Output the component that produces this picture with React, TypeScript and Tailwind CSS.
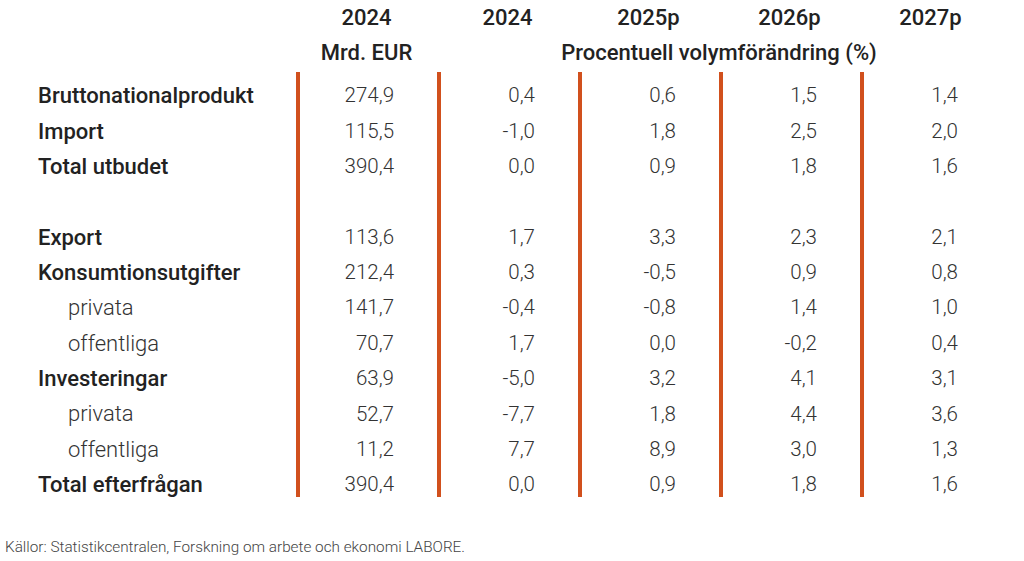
import React from "react";

type Row = { label: string; kind: "main" | "sub" | "blank"; values: string[] };

const rows: Row[] = [
  { label: "Bruttonationalprodukt", kind: "main", values: ["274,9", "0,4", "0,6", "1,5", "1,4"] },
  { label: "Import", kind: "main", values: ["115,5", "-1,0", "1,8", "2,5", "2,0"] },
  { label: "Total utbudet", kind: "main", values: ["390,4", "0,0", "0,9", "1,8", "1,6"] },
  { label: "", kind: "blank", values: ["", "", "", "", ""] },
  { label: "Export", kind: "main", values: ["113,6", "1,7", "3,3", "2,3", "2,1"] },
  { label: "Konsumtionsutgifter", kind: "main", values: ["212,4", "0,3", "-0,5", "0,9", "0,8"] },
  { label: "privata", kind: "sub", values: ["141,7", "-0,4", "-0,8", "1,4", "1,0"] },
  { label: "offentliga", kind: "sub", values: ["70,7", "1,7", "0,0", "-0,2", "0,4"] },
  { label: "Investeringar", kind: "main", values: ["63,9", "-5,0", "3,2", "4,1", "3,1"] },
  { label: "privata", kind: "sub", values: ["52,7", "-7,7", "1,8", "4,4", "3,6"] },
  { label: "offentliga", kind: "sub", values: ["11,2", "7,7", "8,9", "3,0", "1,3"] },
  { label: "Total efterfrågan", kind: "main", values: ["390,4", "0,0", "0,9", "1,8", "1,6"] },
];

const years = ["2024", "2024", "2025p", "2026p", "2027p"];

export default function App() {
  return (
    <div
      className="w-[1024px] h-[561px] bg-white text-[#333333] overflow-hidden"
      style={{ fontFamily: "Roboto, 'Liberation Sans', sans-serif" }}
    >
      {/* header */}
      <div className="grid grid-cols-[296px_repeat(5,141px)]">
        <div className="h-[35px]" />
        {years.map((y, i) => (
          <div key={i} className="h-[35px] flex items-center justify-center text-[22px] font-medium text-[#222222]">
            {y}
          </div>
        ))}
        <div className="h-[35px]" />
        <div className="h-[35px] flex items-center justify-center text-[22px] font-medium text-[#222222]">
          Mrd. EUR
        </div>
        <div className="col-span-4 h-[35px] flex items-center justify-center text-[22px] font-medium text-[#222222] whitespace-nowrap">
          Procentuell volymförändring (%)
        </div>
      </div>

      {/* body */}
      <div className="mt-[2px] flex">
        <div className="w-[296px] pl-[38px] pt-[6px] h-[425px]">
          {rows.map((r, i) => (
            <div
              key={i}
              className={
                "h-[35.36px] flex items-center text-[22px] whitespace-nowrap " +
                (r.kind === "sub" ? "pl-[30px] font-light text-[#333333]" : "font-medium text-[#222222]")
              }
            >
              {r.label}
            </div>
          ))}
        </div>
        {years.map((_, c) => (
          <div key={c} className="w-[141px] h-[425px] border-l-4 border-[#d1501d] pt-[6px] pr-[43px]">
            {rows.map((r, i) => (
              <div
                key={i}
                className="h-[35.36px] flex items-center justify-end text-[20.5px] font-light text-[#333333] whitespace-nowrap"
              >
                {r.values[c]}
              </div>
            ))}
          </div>
        ))}
      </div>

      <div className="mt-[39px] pl-[5px] text-[15.3px] font-light text-[#444444] whitespace-nowrap">
        Källor: Statistikcentralen, Forskning om arbete och ekonomi LABORE.
      </div>
    </div>
  );
}
